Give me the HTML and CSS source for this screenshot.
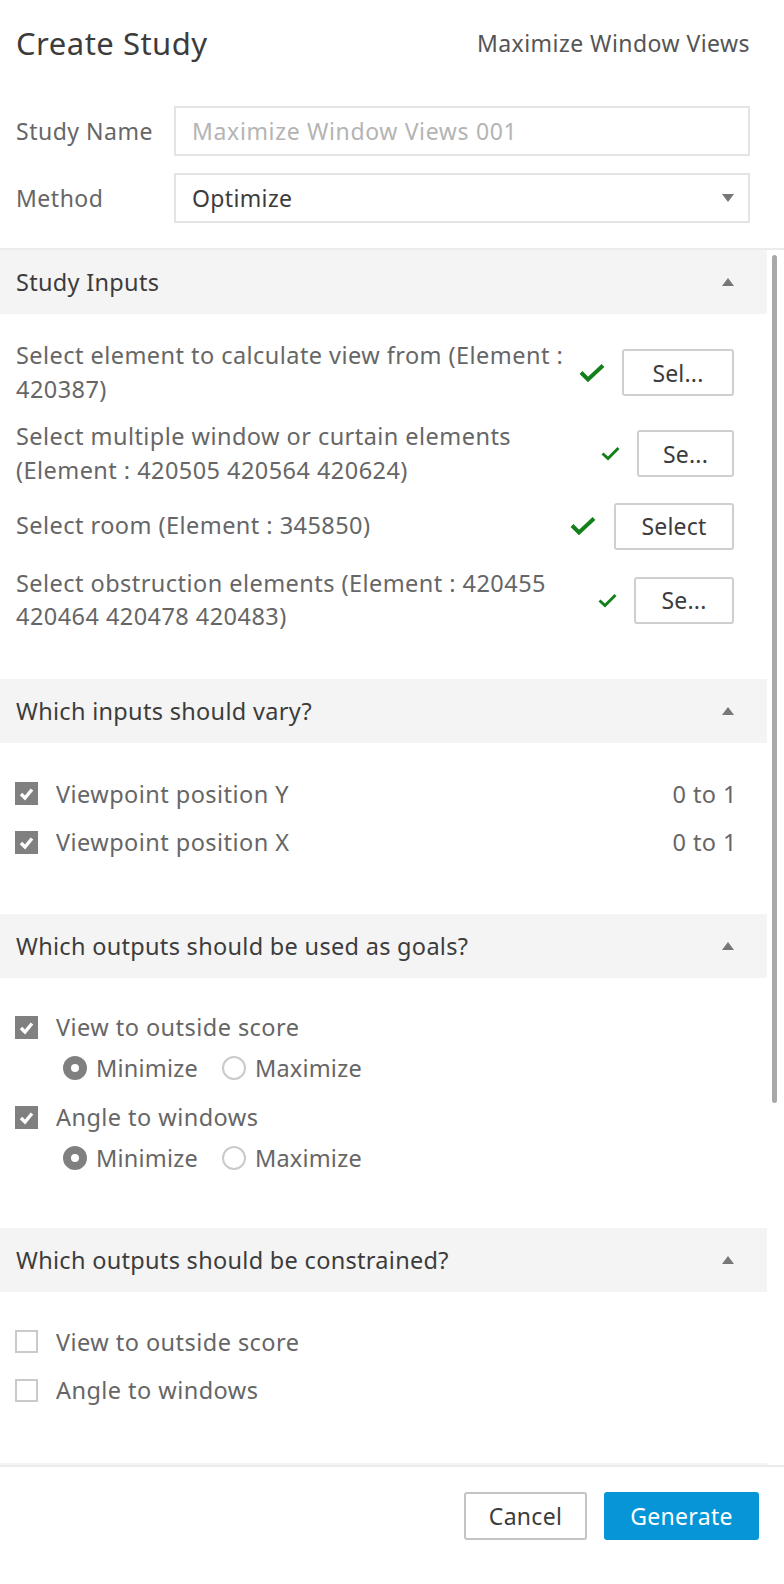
FILE: index.html
```html
<!DOCTYPE html>
<html>
<head>
<meta charset="utf-8">
<link rel="stylesheet" href="styles.css">
</head>
<body>
<div class="panel">
  <div class="top">
    <div class="title-row">
      <h1 class="title">Create Study</h1>
      <div class="subtitle">Maximize Window Views</div>
    </div>
    <div class="form">
      <label class="label">Study Name</label>
      <div class="field"><span class="placeholder">Maximize Window Views 001</span></div>
      <label class="label">Method</label>
      <div class="field select"><span class="value">Optimize</span><span class="caret-down"></span></div>
    </div>
  </div>

  <div class="scroll">
    <div class="scroll-inner">
      <section class="section s1">
        <div class="sec-head"><span>Study Inputs</span><span class="caret-up"></span></div>
        <div class="sec-body inputs">
          <div class="in-row">
            <div class="in-text">Select element to calculate view from (Element :<br>420387)</div>
            <svg class="chk big" viewBox="0 0 26 20"><polyline points="2,9.5 9,16.5 24,2.5"/></svg>
            <button class="sel w1">Sel...</button>
          </div>
          <div class="in-row">
            <div class="in-text">Select multiple window or curtain elements<br>(Element : 420505 420564 420624)</div>
            <svg class="chk small" viewBox="0 0 19 15"><polyline points="1.5,7.5 7,12.5 17.5,2"/></svg>
            <button class="sel w2">Se...</button>
          </div>
          <div class="in-row">
            <div class="in-text">Select room (Element : 345850)</div>
            <svg class="chk big" viewBox="0 0 26 20"><polyline points="2,9.5 9,16.5 24,2.5"/></svg>
            <button class="sel w3">Select</button>
          </div>
          <div class="in-row">
            <div class="in-text">Select obstruction elements (Element : 420455<br>420464 420478 420483)</div>
            <svg class="chk small" viewBox="0 0 19 15"><polyline points="1.5,7.5 7,12.5 17.5,2"/></svg>
            <button class="sel w4">Se...</button>
          </div>
        </div>
      </section>

      <section class="section">
        <div class="sec-head"><span>Which inputs should vary?</span><span class="caret-up"></span></div>
        <div class="sec-body list vary">
          <div class="cb-row">
            <span class="cb on"><svg viewBox="0 0 23 23"><polyline points="6,12 10,16 17,7.5"/></svg></span>
            <span class="cb-label">Viewpoint position Y</span>
            <span class="range">0 to 1</span>
          </div>
          <div class="cb-row">
            <span class="cb on"><svg viewBox="0 0 23 23"><polyline points="6,12 10,16 17,7.5"/></svg></span>
            <span class="cb-label">Viewpoint position X</span>
            <span class="range">0 to 1</span>
          </div>
        </div>
      </section>

      <section class="section">
        <div class="sec-head"><span>Which outputs should be used as goals?</span><span class="caret-up"></span></div>
        <div class="sec-body goals">
          <div class="goal">
            <div class="cb-row">
              <span class="cb on"><svg viewBox="0 0 23 23"><polyline points="6,12 10,16 17,7.5"/></svg></span>
              <span class="cb-label">View to outside score</span>
            </div>
            <div class="radio-row">
              <span class="radio on"></span><span class="r-label">Minimize</span>
              <span class="radio"></span><span class="r-label">Maximize</span>
            </div>
          </div>
          <div class="goal">
            <div class="cb-row">
              <span class="cb on"><svg viewBox="0 0 23 23"><polyline points="6,12 10,16 17,7.5"/></svg></span>
              <span class="cb-label">Angle to windows</span>
            </div>
            <div class="radio-row">
              <span class="radio on"></span><span class="r-label">Minimize</span>
              <span class="radio"></span><span class="r-label">Maximize</span>
            </div>
          </div>
        </div>
      </section>

      <section class="section">
        <div class="sec-head"><span>Which outputs should be constrained?</span><span class="caret-up"></span></div>
        <div class="sec-body list constr">
          <div class="cb-row">
            <span class="cb"></span>
            <span class="cb-label">View to outside score</span>
          </div>
          <div class="cb-row">
            <span class="cb"></span>
            <span class="cb-label">Angle to windows</span>
          </div>
        </div>
      </section>

      <section class="section">
        <div class="sec-head"></div>
      </section>
    </div>
    <div class="thumb"></div>
  </div>

  <div class="footer">
    <button class="btn cancel">Cancel</button>
    <button class="btn primary">Generate</button>
  </div>
</div>
</body>
</html>
```

FILE: styles.css
```css
* { box-sizing: border-box; }
html, body { margin: 0; padding: 0; background: #fff; }
body {
  font-family: "Noto Sans", "Open Sans", sans-serif;
  color: #666;
  width: 784px;
  height: 1584px;
  overflow: hidden;
  letter-spacing: 0.35px;
}
.panel { width: 784px; height: 1584px; display: flex; flex-direction: column; }

.top {
  padding: 0 34px 25px 16px;
  border-bottom: 2px solid #ebebeb;
}
.title-row {
  height: 86px;
  display: flex;
  align-items: center;
  justify-content: space-between;
}
.title {
  margin: 0;
  font-size: 31px;
  font-weight: 400;
  color: #3c3c3c;
  letter-spacing: 0.5px;
}
.subtitle { font-size: 23px; color: #555; letter-spacing: 0.45px; }

.form {
  margin-top: 20px;
  display: grid;
  grid-template-columns: 158px 1fr;
  row-gap: 17px;
  align-items: center;
}
.label { font-size: 23px; color: #666; letter-spacing: 0.5px; }
.field {
  height: 50px;
  border: 2px solid #e4e4e4;
  display: flex;
  align-items: center;
  padding: 0 16px 0 16px;
  font-size: 23px;
}
.placeholder { color: #b4b4b4; letter-spacing: 0.65px; }
.value { color: #3c3c3c; flex: 1; }
.caret-down {
  width: 0; height: 0;
  border-left: 6px solid transparent;
  border-right: 6px solid transparent;
  border-top: 8px solid #777;
  margin-right: -2px;
}

.scroll {
  height: 1217px;
  overflow: hidden;
  position: relative;
  border-bottom: 2px solid #ebebeb;
}
.scroll-inner { width: 767px; }
.thumb {
  position: absolute;
  left: 772px;
  top: 5px;
  width: 5px;
  height: 848px;
  background: #a9a9a9;
  border-radius: 3px;
}

.sec-head {
  height: 64px;
  background: #f4f4f4;
  display: flex;
  align-items: center;
  justify-content: space-between;
  padding: 0 33px 0 16px;
  font-size: 23.5px;
  letter-spacing: 0.3px;
  color: #3c3c3c;
}
.caret-up {
  width: 0; height: 0;
  border-left: 6px solid transparent;
  border-right: 6px solid transparent;
  border-bottom: 8px solid #777;
}

.sec-body { padding: 32px 33px 55px 16px; font-size: 23.5px; letter-spacing: 0.45px; line-height: 34px; }
.sec-body.inputs { padding-top: 25px; padding-bottom: 45px; display: flex; flex-direction: column; gap: 14px; line-height: 33.5px; }
.sec-body.inputs .in-row:nth-child(3) { margin-top: 1.5px; }
.sec-body.inputs .in-row:nth-child(4) { margin-top: 3px; }
.sec-body.list { display: flex; flex-direction: column; gap: 14.5px; }
.sec-body.vary { padding-top: 34px; padding-bottom: 55px; }
.sec-body.constr { padding-top: 33px; padding-bottom: 56px; }
.sec-body.goals { padding-top: 32px; padding-bottom: 53px; display: flex; flex-direction: column; gap: 15.5px; }

.in-row { display: flex; align-items: center; min-height: 47px; }
.in-text { flex: 1; color: #666; white-space: nowrap; }
.chk { fill: none; stroke: #13801a; stroke-linecap: butt; stroke-linejoin: miter; flex: none; }
.chk.big { width: 26px; height: 20px; stroke-width: 4; }
.chk.small { width: 19px; height: 15px; stroke-width: 3; }
.sel {
  height: 47px;
  margin-left: 17px;
  border: 2px solid #cfcfcf;
  border-radius: 3px;
  background: #fff;
  font-family: "Noto Sans", sans-serif;
  font-size: 23px;
  letter-spacing: 0.2px;
  color: #3c3c3c;
  padding: 0;
  flex: none;
}
.w1 { width: 112px; }
.w2 { width: 97px; }
.w3 { width: 120px; margin-left: 18px; }
.w4 { width: 100px; }

.cb-row { display: flex; align-items: center; height: 34px; }
.cb {
  width: 23px; height: 23px;
  margin-left: -1px;
  border: 2px solid #cacaca;
  background: #fff;
  flex: none;
  display: flex;
}
.cb.on { background: #808080; border: none; }
.cb svg { width: 23px; height: 23px; fill: none; stroke: #fff; stroke-width: 3.4; }
.cb-label { margin-left: 18px; flex: 1; color: #666; }
.range { color: #666; margin-right: -3px; }

.goal { display: flex; flex-direction: column; gap: 6.5px; }
.radio-row { display: flex; align-items: center; height: 34px; padding-left: 47px; }
.radio {
  width: 24px; height: 24px;
  border-radius: 50%;
  border: 2px solid #cacaca;
  flex: none;
}
.radio.on { border: 8px solid #808080; background: #fff; }
.r-label { margin-left: 9px; margin-right: 24px; color: #666; letter-spacing: 0.2px; }

.footer {
  flex: 1;
  display: flex;
  justify-content: flex-end;
  align-items: flex-start;
  padding: 25px 25px 0 0;
  gap: 17px;
}
.btn {
  height: 48px;
  border-radius: 3px;
  font-family: "Noto Sans", sans-serif;
  font-size: 23px;
  letter-spacing: 0.3px;
  padding: 0;
}
.cancel { width: 123px; background: #fff; border: 2px solid #c4c4c4; color: #3c3c3c; }
.primary { width: 155px; background: #0696d7; border: none; color: #fff; }
```
